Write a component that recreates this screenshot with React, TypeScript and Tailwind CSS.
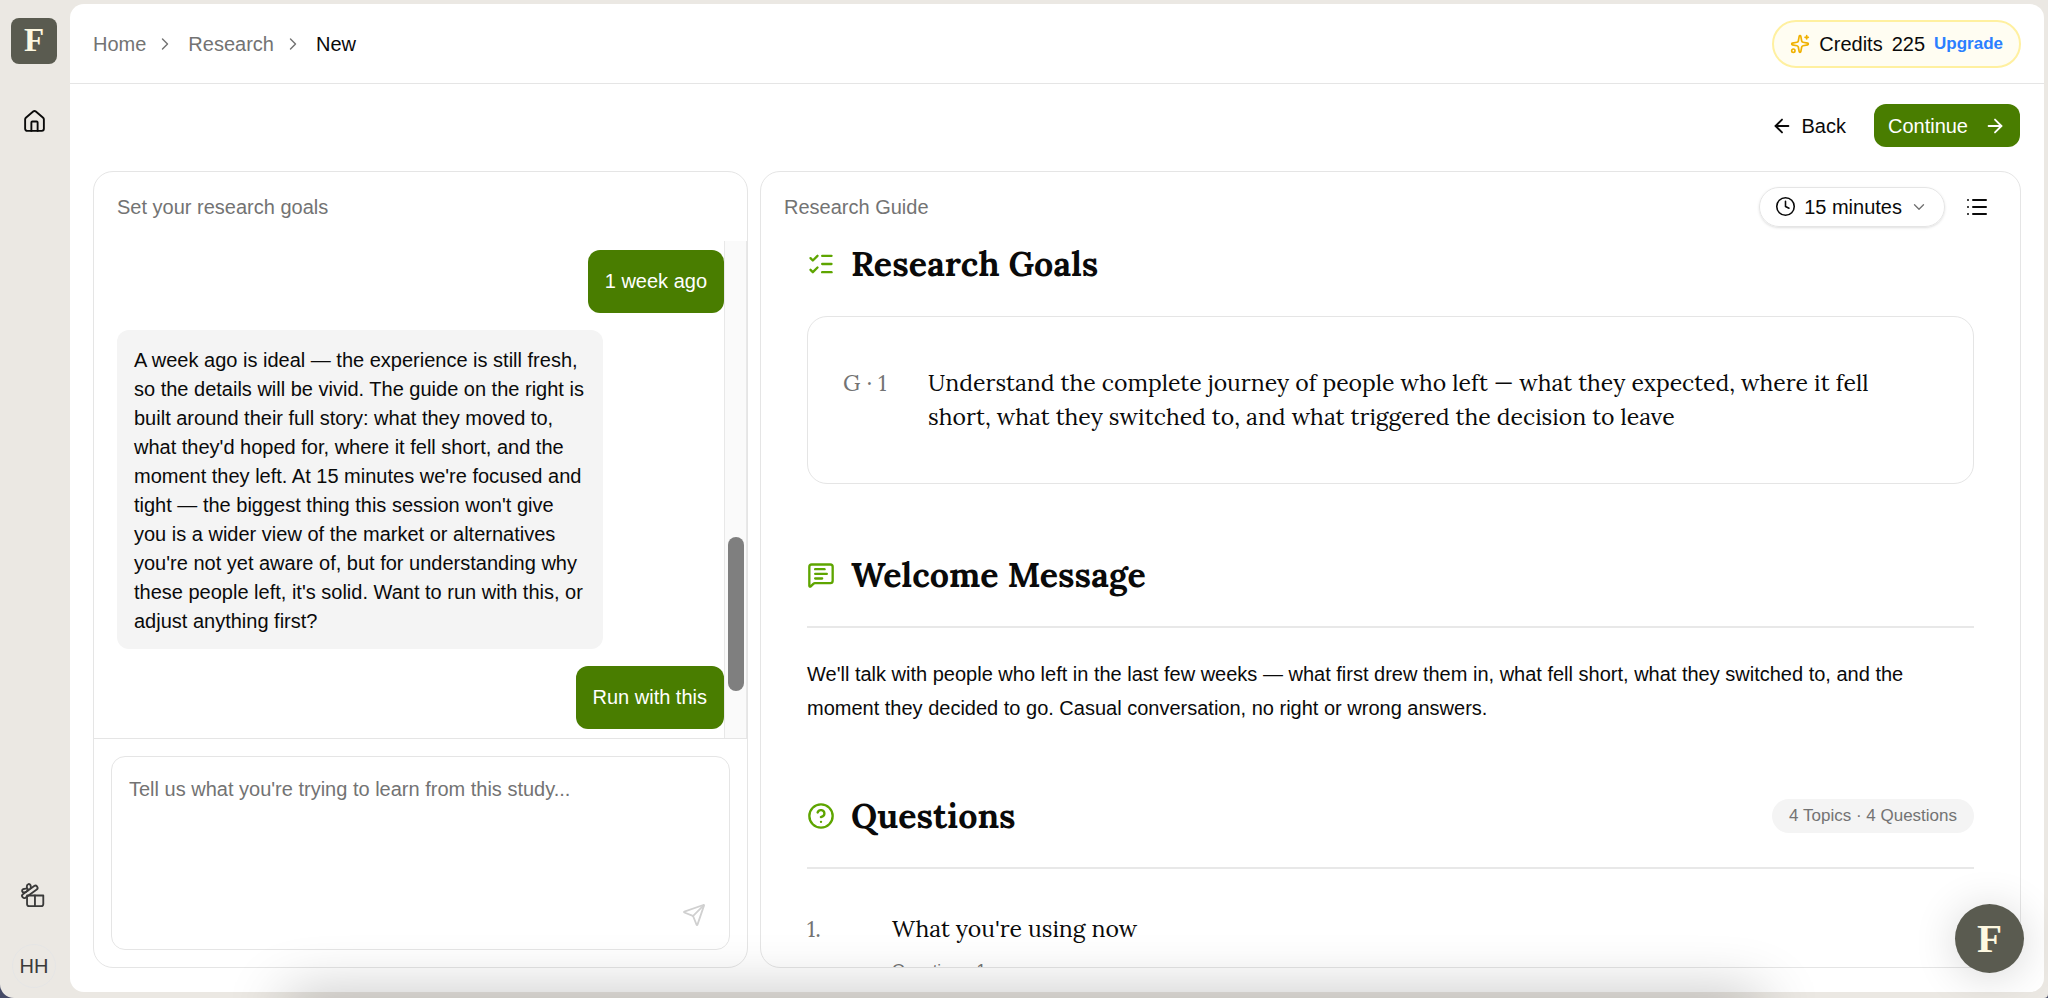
import { ReactNode } from "react";
import {
  ArrowLeft,
  ArrowRight,
  ChevronDown,
  ChevronRight,
  CircleQuestionMark,
  Clock,
  House,
  List,
  ListChecks,
  MessageSquareText,
  Send,
} from "lucide-react";

function SparkleIcon() {
  return (
    <svg viewBox="0 0 24 24" className="size-5" fill="none" stroke="currentColor" strokeWidth="2" strokeLinecap="round" strokeLinejoin="round" aria-hidden="true">
      <path d="M11.017 2.814a1 1 0 0 1 1.966 0l1.051 5.558a2 2 0 0 0 1.594 1.594l5.558 1.051a1 1 0 0 1 0 1.966l-5.558 1.051a2 2 0 0 0-1.594 1.594l-1.051 5.558a1 1 0 0 1-1.966 0l-1.051-5.558a2 2 0 0 0-1.594-1.594l-5.558-1.051a1 1 0 0 1 0-1.966l5.558-1.051a2 2 0 0 0 1.594-1.594z" />
      <path d="M20 2v4" />
      <path d="M22 4h-4" />
      <circle cx="4" cy="20" r="2" />
    </svg>
  );
}

function OpenGiftIcon() {
  return (
    <svg viewBox="0 0 24 24" className="size-[26px]" fill="none" stroke="currentColor" strokeWidth="1.7" strokeLinecap="round" strokeLinejoin="round" aria-hidden="true">
      <path d="M6.500 12.500h15v7.700a2 2 0 0 1-2 2h-11a2 2 0 0 1-2-2z" />
      <path d="M13.800 12.500v9.700" />
      <rect x="0.800" y="7" width="16.500" height="4" rx="1.800" transform="rotate(-36 9.100 9)" />
      <path d="M7 8C5.500 9.600 2.600 10.200 2 8.600 1.400 7 3.400 5.600 7 6.200" />
      <path d="M7.200 7.200C5.800 5 6 2.200 7.800 1.900c1.800-.2 2.600 1.700 2 4" />
    </svg>
  );
}

function SectionHeading({ icon, title, children }: { icon: ReactNode; title: string; children?: ReactNode }) {
  return (
    <div className="flex items-center gap-4">
      <span className="text-[#5ea500]">{icon}</span>
      <h2 className="font-['Lora','Liberation_Serif',serif] text-[34px] leading-[46px] font-bold">{title}</h2>
      {children}
    </div>
  );
}

function UserMessage({ children }: { children: ReactNode }) {
  return (
    <p className="self-end rounded-xl bg-[#497d00] px-[17px] py-[17px] leading-[29px] text-white">{children}</p>
  );
}

export default function App() {
  return (
    <div className="h-screen bg-[#454a66]">
      <div className="relative flex h-full overflow-hidden rounded-br-sm rounded-bl-[14px] bg-[#ebe8e3] font-['Liberation_Sans',Arial,sans-serif] text-[20px] text-[#0a0a0a]">
        <nav aria-label="Main" className="flex w-[70px] shrink-0 flex-col items-center pt-[18px] pr-[2px] pb-[10px]">
          <a href="#" aria-label="Workspace" className="flex size-[46px] items-center justify-center rounded-lg bg-[#5a5b50] font-['Liberation_Serif',serif] text-[33px] font-bold text-[#fdf8e1]">
            F
          </a>
          <a href="#" aria-label="Home" className="mt-[45px]">
            <House className="size-[25px]" strokeWidth={1.8} />
          </a>
          <a href="#" aria-label="Rewards" className="mt-auto pr-[2px] text-[#3a3a3a]">
            <OpenGiftIcon />
          </a>
          <button type="button" className="mt-9 flex size-11 items-center justify-center rounded-full border border-[#e5e5e5] text-[#3a3a3a]">
            HH
          </button>
        </nav>

        <main className="mt-1 mr-1 mb-[6px] flex min-w-0 flex-1 flex-col rounded-[14px] bg-white">
          <header className="flex h-20 shrink-0 items-center justify-between border-b border-[#e5e5e5] px-[23px]">
            <nav aria-label="Breadcrumb" className="flex items-center gap-[9px] text-[#737373]">
              <a href="#">Home</a>
              <ChevronRight className="size-5" strokeWidth={1.7} />
              <a href="#" className="pl-1">Research</a>
              <ChevronRight className="size-5" strokeWidth={1.7} />
              <span aria-current="page" className="pl-1 text-[#0a0a0a]">New</span>
            </nav>
            <div className="flex h-12 items-center gap-[9px] rounded-full border-2 border-[#fff0a0] bg-[#fffdf2] px-4">
              <span className="text-[#f0b100]">
                <SparkleIcon />
              </span>
              <span>Credits</span>
              <span>225</span>
              <a href="#" className="text-[17px] font-bold text-[#2b7fff]">Upgrade</a>
            </div>
          </header>

          <div className="flex shrink-0 justify-end gap-7 pt-5 pr-6 pb-6">
            <button type="button" className="flex h-[43px] items-center gap-2">
              <ArrowLeft className="size-[22px]" strokeWidth={2} />
              Back
            </button>
            <button type="button" className="flex h-[43px] items-center gap-4 rounded-xl bg-[#497d00] px-[14px] text-white">
              Continue
              <ArrowRight className="size-[22px]" strokeWidth={2} />
            </button>
          </div>

          <div className="flex min-h-0 flex-1 gap-3 px-[23px] pb-6">
            <section className="flex w-[655px] shrink-0 flex-col overflow-hidden rounded-[20px] border border-[#e5e5e5]">
              <h1 className="flex h-[69px] shrink-0 items-center pl-[23px] text-[#737373]">Set your research goals</h1>
              <div className="flex min-h-0 flex-1">
                <div className="flex flex-1 flex-col justify-end gap-[17px] overflow-hidden pb-[9px] pl-[23px]">
                  <UserMessage>1 week ago</UserMessage>
                  <p className="w-[486px] self-start rounded-xl bg-[#f4f4f4] px-[17px] pt-4 pb-[13px] leading-[29px]">
                    A week ago is ideal — the experience is still fresh, so the details will be vivid. The guide on the right is built around their full story: what they moved to, what they'd hoped for, where it fell short, and the moment they left. At 15 minutes we're focused and tight — the biggest thing this session won't give you is a wider view of the market or alternatives you're not yet aware of, but for understanding why these people left, it's solid. Want to run with this, or adjust anything first?
                  </p>
                  <UserMessage>Run with this</UserMessage>
                </div>
                <div className="relative w-[23px] border-x border-[#e8e8e8] bg-[#fafafa]">
                  <div className="absolute top-[59.5%] right-[2px] left-[3px] h-[31%] rounded-full bg-[#7f7f7f]" />
                </div>
              </div>
              <div className="border-t border-[#e5e5e5] p-[17px]">
                <div className="flex h-[194px] flex-col rounded-[14px] border border-[#e5e5e5] px-[17px] pt-[18px] pb-[22px]">
                  <textarea
                    aria-label="Research goals"
                    placeholder="Tell us what you're trying to learn from this study..."
                    className="w-full flex-1 resize-none leading-[29px] outline-none placeholder:text-[#737373]"
                  />
                  <button type="button" aria-label="Send" className="mr-[6px] self-end text-[#d0d0d0]">
                    <Send className="size-6" strokeWidth={1.8} />
                  </button>
                </div>
              </div>
            </section>

            <section className="flex min-w-0 flex-1 flex-col overflow-hidden rounded-[20px] border border-[#e5e5e5]">
              <div className="flex h-[69px] shrink-0 items-center pr-[31px] pl-[23px]">
                <h1 className="text-[#737373]">Research Guide</h1>
                <label className="relative ml-auto flex h-10 items-center rounded-full border border-[#e5e5e5] shadow-sm">
                  <Clock className="absolute left-[15px] size-[21px]" strokeWidth={1.8} />
                  <select aria-label="Duration" className="field-sizing-content h-full appearance-none rounded-full bg-transparent pr-[42px] pl-11 outline-none">
                    <option>15 minutes</option>
                  </select>
                  <ChevronDown className="pointer-events-none absolute right-4 size-[18px] text-[#737373]" strokeWidth={1.8} />
                </label>
                <button type="button" aria-label="Outline" className="ml-5">
                  <List className="size-6" strokeWidth={2} />
                </button>
              </div>

              <div className="min-h-0 flex-1 overflow-hidden px-[46px]">
                <SectionHeading icon={<ListChecks className="size-7" />} title="Research Goals" />
                <div className="mt-[29px] flex rounded-[20px] border border-[#e5e5e5] px-[35px] py-[49px] font-['Lora','Liberation_Serif',serif] text-[23px] leading-[34px]">
                  <span className="w-[85px] shrink-0 text-[#737373]">G · 1</span>
                  <p className="max-w-[960px]">
                    Understand the complete journey of people who left — what they expected, where it fell short, what they switched to, and what triggered the decision to leave
                  </p>
                </div>

                <div className="mt-17 border-b-2 border-[#e8e8e8] pb-7">
                  <SectionHeading icon={<MessageSquareText className="size-7" />} title="Welcome Message" />
                </div>
                <p className="mt-[29px] leading-[34px]">
                  We'll talk with people who left in the last few weeks — what first drew them in, what fell short, what they switched to, and the moment they decided to go. Casual conversation, no right or wrong answers.
                </p>

                <div className="mt-17 border-b-2 border-[#e8e8e8] pb-7">
                  <SectionHeading icon={<CircleQuestionMark className="size-7" />} title="Questions">
                    <span className="ml-auto rounded-full bg-[#f4f4f4] px-[17px] py-1 text-[17px] leading-[26px] text-[#737373]">4 Topics · 4 Questions</span>
                  </SectionHeading>
                </div>
                <ol className="mt-[43px]">
                  <li className="flex">
                    <span className="w-[85px] shrink-0 font-['Lora','Liberation_Serif',serif] text-[23px] leading-[34px] text-[#737373]">1.</span>
                    <div>
                      <h3 className="font-['Lora','Liberation_Serif',serif] text-[23px] leading-[34px]">What you're using now</h3>
                      <p className="mt-3 flex gap-2 text-[17px] leading-[26px] text-[#737373]">
                        <span>Questions</span>
                        <span>1</span>
                      </p>
                    </div>
                  </li>
                </ol>
              </div>
            </section>
          </div>
        </main>

        <button type="button" aria-label="Open assistant" className="absolute right-6 bottom-[25px] flex size-[69px] items-center justify-center rounded-full bg-[#5a5b50] font-['Liberation_Serif',serif] text-[41px] font-bold text-[#fdf8e1] shadow-[0_4px_44px_rgba(0,0,0,0.16)]">
          F
        </button>
        <div className="pointer-events-none absolute top-full right-[14%] left-[14%] h-10 shadow-[0_0_60px_rgba(0,0,0,0.3)]" />
      </div>
    </div>
  );
}
